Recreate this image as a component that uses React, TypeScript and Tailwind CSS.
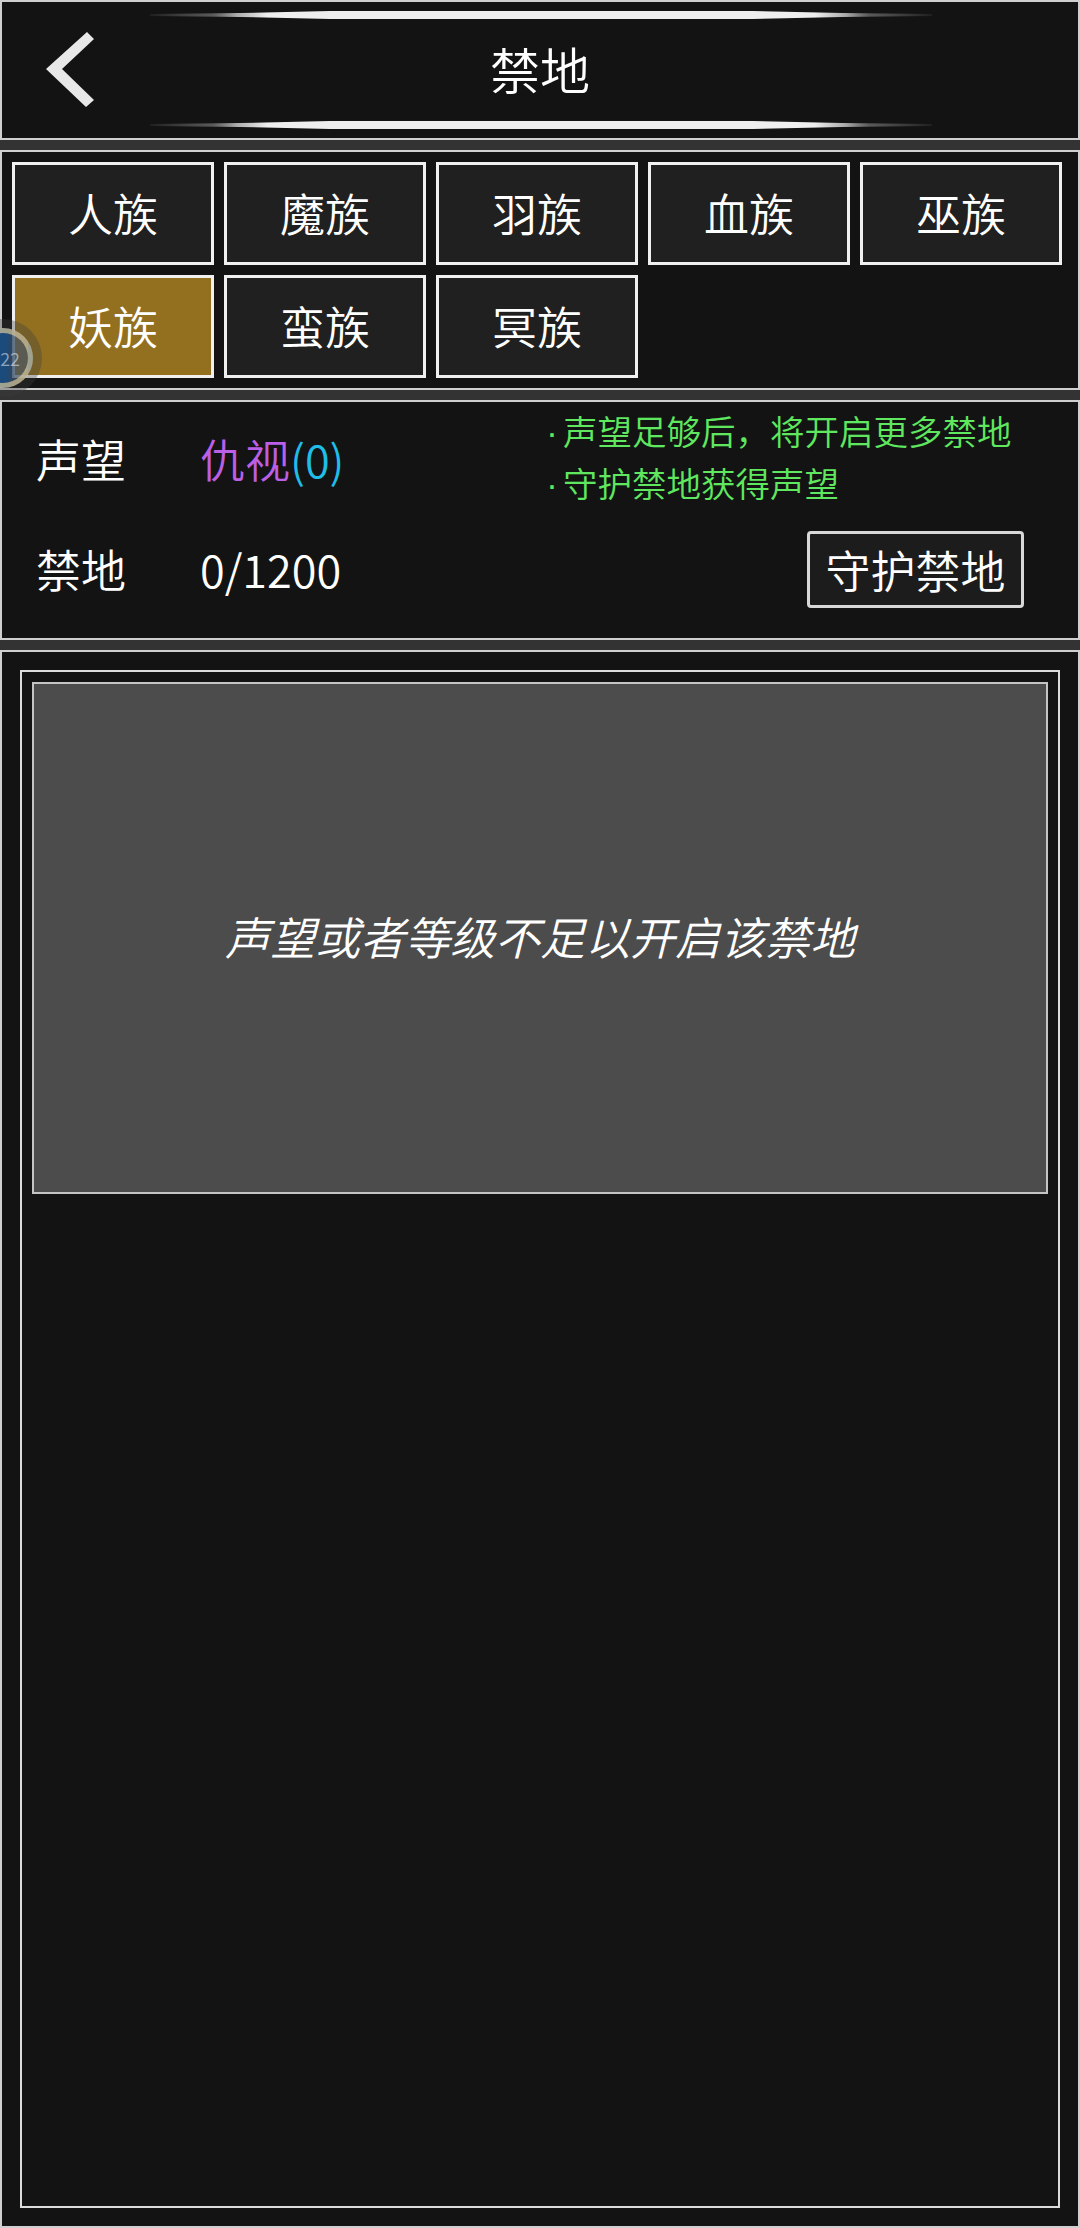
export default function App() {
  const races = ["人族", "魔族", "羽族", "血族", "巫族", "妖族", "蛮族", "冥族"];
  const section = "border-2 border-[#cfcfcf] bg-[#131313]";
  return (
    <div className="relative w-[1080px] h-[2228px] overflow-hidden bg-[#333333] text-white flex flex-col gap-[10px] font-[350] font-['Noto_Sans_CJK_SC','Noto_Sans_CJK_JP',sans-serif]">
      <header className={`${section} h-[140px] shrink-0 flex items-center justify-center relative pb-[5px]`}>
        <svg className="absolute left-0 top-0" width="120" height="130" viewBox="0 0 120 130">
          <polygon points="44,67 85,30 92,37 60,67 92,98 84,105" fill="#e8e8e8" />
        </svg>
        <svg className="absolute left-[148px] top-[8px]" width="782" height="10" viewBox="0 0 782 10">
          <defs>
            <linearGradient id="g1" x1="0" x2="1" y1="0" y2="0">
              <stop offset="0" stopColor="#888" stopOpacity="0.1" />
              <stop offset="0.08" stopColor="#777" stopOpacity="0.7" />
              <stop offset="0.11" stopColor="#aaa" />
              <stop offset="0.15" stopColor="#eee" />
              <stop offset="0.85" stopColor="#eee" />
              <stop offset="0.89" stopColor="#aaa" />
              <stop offset="0.92" stopColor="#777" stopOpacity="0.7" />
              <stop offset="1" stopColor="#888" stopOpacity="0.1" />
            </linearGradient>
          </defs>
          <polygon points="0,4 90,3 180,1 602,1 692,3 782,4 782,6 692,7 602,9 180,9 90,7 0,6" fill="url(#g1)" />
        </svg>
        <svg className="absolute left-[148px] top-[118px]" width="782" height="10" viewBox="0 0 782 10">
          <polygon points="0,4 90,3 180,1 602,1 692,3 782,4 782,6 692,7 602,9 180,9 90,7 0,6" fill="url(#g1)" />
        </svg>
        <span className="text-[50px] leading-none">禁地</span>
      </header>

      <section className={`${section} h-[240px] shrink-0 pl-[10px] pt-[10px]`}>
        <div className="grid grid-cols-[repeat(5,202px)] auto-rows-[103px] gap-x-[10px] gap-y-[10px]">
          {races.map((r, i) => (
            <div
              key={r}
              className={`border-[3px] border-[#f0f0f0] flex items-center justify-center pb-[3px] text-[45px] leading-none ${i === 5 ? "bg-[#937020]" : "bg-[#202020]"}`}
            >
              {r}
            </div>
          ))}
        </div>
      </section>

      <section className={`${section} h-[240px] shrink-0 flex justify-between pl-[34px] pr-[54px]`}>
        <div className="flex flex-col pt-[24px] gap-[46px]">
          <div className="flex items-center h-[64px] text-[45px] leading-none">
            <span className="w-[164px]">声望</span>
            <span className="text-[#bb5fe6]">仇视</span>
            <span className="text-[#1fbde8]">(0)</span>
          </div>
          <div className="flex items-center h-[64px] text-[45px] leading-none">
            <span className="w-[164px]">禁地</span>
            <span>0/1200</span>
          </div>
        </div>
        <div className="flex flex-col items-end">
          <div className="w-[489px] self-start pt-[4px] text-[34.5px] leading-[49px] text-[#5fe85f] whitespace-nowrap">
            <div><span className="inline-block w-[28px] pl-[6px] text-center font-['Liberation_Sans',sans-serif]">·</span>声望足够后，将开启更多禁地</div>
            <div><span className="inline-block w-[28px] pl-[6px] text-center font-['Liberation_Sans',sans-serif]">·</span>守护禁地获得声望</div>
          </div>
          <div className="mt-[21px] w-[217px] h-[77px] rounded-[4px] border-[3px] border-[#d8d8d8] bg-[#1c1c1c] flex items-center justify-center text-[45px] leading-none">
            守护禁地
          </div>
        </div>
      </section>

      <section className={`${section} flex-1 min-h-0 px-[18px] pt-[18px] pb-[18px]`}>
        <div className="h-full border-2 border-[#dcdcdc] p-[10px]">
          <div className="h-[512px] border-2 border-[#c4c4c4] bg-[#4c4c4c] flex items-center justify-center pb-[6px] text-[45px] italic leading-none">
            声望或者等级不足以开启该禁地
          </div>
        </div>
      </section>

      <div className="absolute left-[-27px] top-[328px] w-[60px] h-[60px] rounded-full border-[5px] border-[#d9c89a]/70 bg-[linear-gradient(90deg,#1b4a7d_55%,rgba(70,85,100,0.75)_75%)] shadow-[0_0_0_9px_rgba(60,60,60,0.35)] flex items-center justify-end pr-[8px] text-[18px] leading-none text-white/50">
        22
      </div>
    </div>
  );
}
